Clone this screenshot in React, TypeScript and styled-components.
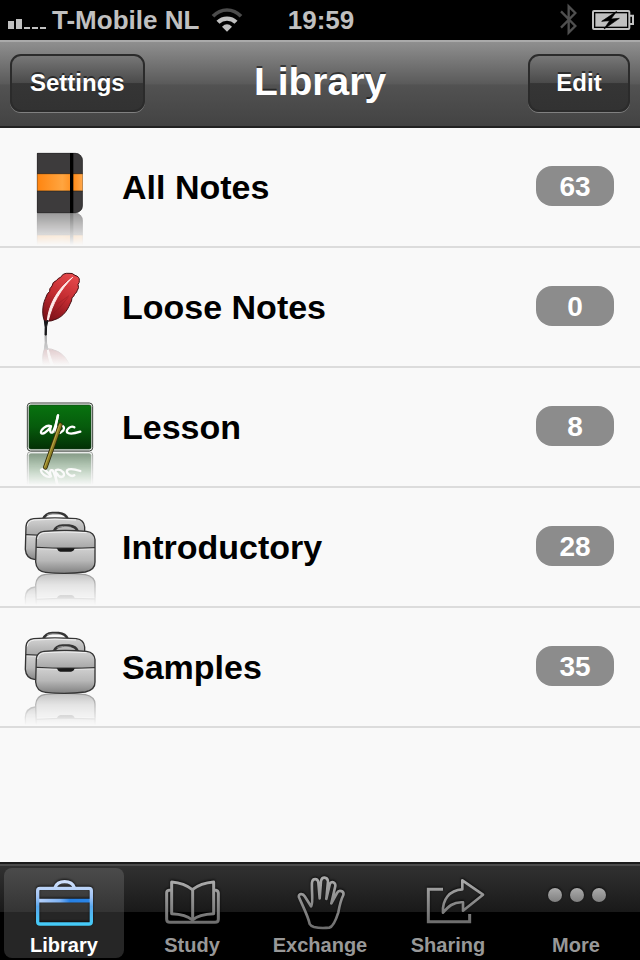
import React, { ReactNode, useId, useState } from 'react';
import styled, { createGlobalStyle } from 'styled-components';

const GlobalStyle = createGlobalStyle`
  * { box-sizing: border-box; }
  body {
    margin: 0;
    background: #f9f9f9;
    font-family: "Liberation Sans", Arial, Helvetica, sans-serif;
    font-weight: bold;
  }
  button { font: inherit; margin: 0; border: 0; cursor: pointer; }
  svg { display: block; flex: none; }
`;

const Screen = styled.div`
  display: flex;
  flex-direction: column;
  min-height: 100vh;
`;

const StatusBar = styled.div`
  display: grid;
  grid-template-columns: 1fr auto 1fr;
  align-items: center;
  height: 40px;
  padding: 0 6px 0 8px;
  background: #000;
  color: #c0c0c0;
  font-size: 26px;
  line-height: 40px;
  white-space: nowrap;
`;

const StatusGroup = styled.div<{ $end?: boolean }>`
  display: flex;
  align-items: center;
  gap: ${(p) => (p.$end ? '14px' : '6px')};
  justify-content: ${(p) => (p.$end ? 'flex-end' : 'flex-start')};
`;

const Carrier = styled.span`
  margin-right: 6px;
`;

const NavBar = styled.header`
  display: grid;
  grid-template-columns: 1fr auto 1fr;
  align-items: center;
  height: 88px;
  padding: 0 10px 2px;
  background: linear-gradient(#8f8f8f, #5a5a5a 50%, #525252 51%, #434343);
  border-top: 2px solid #aaa;
  border-bottom: 2px solid #222;
`;

const Title = styled.h1`
  grid-column: 2;
  margin: 0;
  padding-bottom: 2px;
  color: #fff;
  font-size: 39px;
  line-height: 48px;
  text-shadow: 0 -2px 0 rgba(0, 0, 0, 0.5);
`;

const BarButton = styled.button<{ $end?: boolean }>`
  justify-self: ${(p) => (p.$end ? 'end' : 'start')};
  min-width: 102px;
  height: 58px;
  padding: 0 18px;
  border: 2px solid #2b2b2b;
  border-radius: 11px;
  background: linear-gradient(#777, #4a4a4a 50%, #353535 51%, #323232);
  box-shadow: 0 1px 0 #808080;
  color: #fff;
  font-size: 24px;
  line-height: 32px;
  text-shadow: 0 -2px 0 rgba(0, 0, 0, 0.5);
`;

const NoteList = styled.ul`
  flex: 1;
  margin: 0;
  padding: 0;
  list-style: none;
  background: #f9f9f9;
`;

const NoteRow = styled.a`
  display: flex;
  align-items: center;
  height: 120px;
  padding-right: 26px;
  border-bottom: 2px solid #dcdcdc;
  color: #000;
  text-decoration: none;
`;

const NoteName = styled.span`
  flex: 1;
  padding-left: 2px;
  font-size: 34px;
  line-height: 40px;
`;

const Count = styled.span`
  min-width: 78px;
  height: 40px;
  margin-bottom: 2px;
  border-radius: 16px;
  background: #8c8c8c;
  color: #fff;
  font-size: 28px;
  line-height: 42px;
  text-align: center;
`;

const TabBar = styled.nav`
  display: grid;
  grid-template-columns: repeat(5, 1fr);
  height: 98px;
  padding-bottom: 4px;
  border-top: 2px solid #1c1c1c;
  background: linear-gradient(#4b4b4b 0 2px, #313131 2px, #191919 48px, #000 48px);
`;

const Tab = styled.button<{ $active: boolean }>`
  display: flex;
  flex-direction: column;
  align-items: center;
  margin: 4px 4px 0;
  padding: 0;
  border-radius: 8px;
  background: ${(p) =>
    p.$active ? 'linear-gradient(#4b4b4b, #343434 44px, #262626 44px, #262626)' : 'transparent'};
  color: ${(p) => (p.$active ? '#fff' : '#989898')};
  font-size: 20px;
  line-height: 26px;
`;

function SignalIcon() {
  return (
    <svg width="38" height="30" viewBox="24 15 114 90" fill="#c0c0c0" aria-hidden="true">
      <path d="M24 63h18v24H24zM48 57h18v30H48zM72 81h18v6H72zM96 81h18v6H96zM120 81h18v6h-18z" />
    </svg>
  );
}

function WifiIcon() {
  return (
    <svg width="32" height="30" viewBox="636 15 96 90" fill="none" aria-hidden="true">
      <path d="M642 49Q660 30 684 30T726 49" stroke="#4c4c4c" strokeWidth="11" />
      <path d="M657 67Q668 56 684 56T711 67" stroke="#c0c0c0" strokeWidth="13" />
      <path d="M669 80Q684 66 699 80L684 95Z" fill="#c0c0c0" />
    </svg>
  );
}

function BluetoothIcon() {
  return (
    <svg width="18" height="34" viewBox="722 9 54 102" fill="none" stroke="#4f4f4f" strokeWidth="7" aria-hidden="true">
      <path d="M725 34l43 44-20 20V19l20 20-43 44" />
    </svg>
  );
}

function BatteryIcon() {
  return (
    <svg width="42" height="22" viewBox="816 24 126 66" aria-hidden="true">
      <rect x="819" y="30" width="109" height="54" rx="3" fill="none" stroke="#c0c0c0" strokeWidth="6" />
      <path d="M930 44h9v25h-9" fill="none" stroke="#c0c0c0" strokeWidth="6" />
      <path d="M826 37h95v40h-95z" fill="#c0c0c0" />
      <path d="M890 31l-45 30 24-2-17 25 46-32-25 2z" fill="#000" stroke="#000" strokeWidth="2" />
    </svg>
  );
}

interface ReflectedProps {
  base: number;
  strength: number;
  front?: ReactNode;
  children: ReactNode;
}

function Reflected({ base, strength, front, children }: ReflectedProps) {
  const id = useId();
  return (
    <svg width="120" height="118" viewBox="0 -6 360 354" aria-hidden="true">
      <defs>
        <linearGradient id={`${id}f`} gradientUnits="userSpaceOnUse" x1="0" y1={base} x2="0" y2="346">
          <stop offset="0" stopColor="#fff" stopOpacity={strength} />
          <stop offset="1" stopColor="#fff" stopOpacity="0" />
        </linearGradient>
        <mask id={`${id}m`} maskUnits="userSpaceOnUse" x="0" y={base} width="360" height="100">
          <rect y={base} width="360" height="100" fill={`url(#${id}f)`} />
        </mask>
      </defs>
      <g mask={`url(#${id}m)`}>
        <g transform={`translate(0 ${base * 2}) scale(1 -1)`}>{children}</g>
      </g>
      {children}
      {front}
    </svg>
  );
}

function NotebookIcon() {
  const id = useId();
  return (
    <Reflected base={249} strength={0.5}>
      <defs>
        <linearGradient id={id}>
          <stop offset="0" stopColor="#ff8510" />
          <stop offset="0.55" stopColor="#ffa540" />
          <stop offset="0.8" stopColor="#ff8c1a" />
          <stop offset="1" stopColor="#ffa84c" />
        </linearGradient>
      </defs>
      <path d="M111 69h115a22 22 0 0 1 22 22v136a22 22 0 0 1-22 22H111z" fill="#3d3b3c" />
      <path d="M112 70h114a21 21 0 0 1 21 21v136a21 21 0 0 1-21 21H112z" fill="none" stroke="#2a292a" strokeWidth="2" />
      <path d="M112 131h136v52H112z" fill={`url(#${id})`} />
      <path d="M111 131h137M111 183h137" stroke="#28211a" strokeWidth="2" />
      <path d="M210 69h10v180h-10z" fill="#000" />
    </Reflected>
  );
}

function FeatherIcon() {
  const id = useId();
  return (
    <Reflected base={255} strength={0.36}>
      <defs>
        <linearGradient id={id} x1="0.7" y1="0" x2="0.3" y2="1">
          <stop offset="0" stopColor="#e4484b" />
          <stop offset="0.5" stopColor="#c22b30" />
          <stop offset="1" stopColor="#7e1219" />
        </linearGradient>
      </defs>
      <path
        d="M134 214C125 195 127 166 136 146Q141 130 149 124Q147 116 156 108Q157 96 170 91Q174 84 182 82Q189 68 207 70Q217 68 225 76Q239 80 238 91Q239 98 234 103Q238 114 232 121Q230 129 224 132Q222 141 216 143Q216 153 210 162C201 184 188 198 172 206Q155 215 134 214Z"
        fill={`url(#${id})`}
        stroke="#451014"
        strokeWidth="3"
      />
      <path d="M144 205Q180 177 204 142M151 186Q154 158 164 137M185 117l15-24M172 162l35-25" stroke="#80161d" strokeOpacity=".35" strokeWidth="3" fill="none" />
      <path d="M142 211C146 168 169 119 218 82C181 119 157 161 145 211Z" fill="#ffeceb" stroke="#ffeceb" strokeWidth="3" />
      <path d="M133 212Q138 217 144 211Q138 228 139 255H135Q137 230 133 212Z" fill="#18181a" stroke="#18181a" strokeWidth="3" />
    </Reflected>
  );
}

function ChalkboardIcon() {
  const id = useId();
  const pointer = (
    <g strokeLinecap="round">
      <path d="M181 164L136 292" stroke="#302a0b" strokeWidth="14" />
      <path d="M181 164L136 292" stroke="#8d7d22" strokeWidth="9" />
      <path d="M179 164L134 291" stroke="#cdbd5c" strokeWidth="2" />
    </g>
  );
  return (
    <Reflected base={244} strength={0.5} front={pointer}>
      <defs>
        <linearGradient id={id} x1="0" y1="0" x2="0" y2="1">
          <stop offset="0" stopColor="#08730f" />
          <stop offset="0.5" stopColor="#065b0c" />
          <stop offset="1" stopColor="#033005" />
        </linearGradient>
      </defs>
      <rect x="82" y="99" width="196" height="144" rx="10" fill="#f4f7f4" stroke="#3b413b" strokeWidth="3" />
      <rect x="87" y="105" width="186" height="132" rx="5" fill={`url(#${id})`} stroke="#173c19" strokeWidth="2" />
      <g fill="none" stroke="#fff" strokeWidth="7" strokeLinecap="round" strokeLinejoin="round">
        <path d="M153 169C139 162 122 180 123 188C127 196 142 185 153 169C149 179 149 191 158 187Q166 174 174 136" />
        <path d="M174 136Q166 162 167 187Q178 193 190 181Q196 169 184 167Q175 167 171 178" />
        <path d="M223 172C212 165 198 179 201 187Q210 195 241 185" />
      </g>
    </Reflected>
  );
}

function CasesIcon() {
  const id = useId();
  const bag = (
    <g stroke="#353535" strokeWidth="4">
      <path d="M161 125Q167 108 188 107H207Q228 109 234 125" fill="none" strokeWidth="8" />
      <path d="M172 113Q188 106 213 112" fill="none" stroke="#bdbdbd" strokeWidth="2" />
      <path d="M109 147Q111 126 132 124Q196 119 260 124Q283 127 285 149V216Q286 239 256 246Q196 254 137 247Q109 244 107 216Z" fill={`url(#${id})`} />
      <path d="M109 172Q196 177 285 173" fill="none" />
      <path d="M111 176Q196 181 283 177" fill="none" stroke="#eee" strokeWidth="2" />
      <path d="M113 147Q114 130 134 128Q196 123 259 128" fill="none" stroke="#f1f1f1" strokeWidth="3" />
      <path d="M170 175H224Q221 185 213 185H181Q174 184 170 175Z" fill="#1a1a1a" stroke="none" />
    </g>
  );
  return (
    <Reflected base={250} strength={0.48}>
      <defs>
        <linearGradient id={id} x1="0" y1="0" x2="0" y2="1">
          <stop offset="0" stopColor="#d4d4d4" />
          <stop offset="0.39" stopColor="#a9a9a9" />
          <stop offset="0.42" stopColor="#cfcfcf" />
          <stop offset="0.7" stopColor="#b8b8b8" />
          <stop offset="1" stopColor="#808080" />
        </linearGradient>
      </defs>
      <g transform="translate(-31 -38)">{bag}</g>
      {bag}
    </Reflected>
  );
}

const TabSvg = styled.svg`
  filter: drop-shadow(0 -1px 1px rgba(0, 0, 0, 0.7));
`;

function TabGradient({ id, y1, y2 }: { id: string; y1: number; y2: number }) {
  return (
    <linearGradient id={id} gradientUnits="userSpaceOnUse" x1="0" y1={y1} x2="0" y2={y2}>
      <stop offset="0" stopColor="#acacac" />
      <stop offset="1" stopColor="#6c6c6c" />
    </linearGradient>
  );
}

function LibraryTabIcon() {
  return (
    <TabSvg width="80" height="64" viewBox="72 39 240 192" fill="none" aria-hidden="true">
      <defs>
        <linearGradient id="tab-library" gradientUnits="userSpaceOnUse" x1="0" y1="75" x2="0" y2="212">
          <stop offset="0" stopColor="#d3e2fb" />
          <stop offset="0.38" stopColor="#9fc3f5" />
          <stop offset="0.58" stopColor="#5aa9ef" />
          <stop offset="1" stopColor="#43cdf8" />
        </linearGradient>
        <linearGradient id="tab-library-lid" gradientUnits="userSpaceOnUse" x1="116" y1="0" x2="272" y2="0">
          <stop offset="0" stopColor="#b5d0f9" />
          <stop offset="0.4" stopColor="#80b4f5" />
          <stop offset="0.6" stopColor="#2680e5" />
          <stop offset="1" stopColor="#2b86e8" />
        </linearGradient>
      </defs>
      <path d="M165 98Q171 80 194 80T223 98" stroke="url(#tab-library)" strokeWidth="10" />
      <path d="M116 137H272" stroke="url(#tab-library-lid)" strokeWidth="11" />
      <rect x="113" y="100" width="161" height="107" rx="7" stroke="url(#tab-library)" strokeWidth="10" />
    </TabSvg>
  );
}

function StudyTabIcon() {
  return (
    <TabSvg width="80" height="64" viewBox="456 39 240 192" fill="none" aria-hidden="true">
      <defs><TabGradient id="tab-study" y1={75} y2={208} /></defs>
      <g stroke="url(#tab-study)" strokeWidth="9" strokeLinejoin="round">
        <path d="M514 106H507Q500 107 500 114V193Q500 202 510 202H645Q655 202 655 193V114Q654 107 648 106H641" />
        <path d="M577 195Q558 178 515 176V81Q553 84 577 104Q602 84 641 81V176Q597 178 577 195Z" />
        <path d="M578 103V196" />
      </g>
    </TabSvg>
  );
}

function ExchangeTabIcon() {
  return (
    <TabSvg width="80" height="64" viewBox="150 39 240 192" fill="none" aria-hidden="true">
      <defs><TabGradient id="tab-exchange" y1={65} y2={222} /></defs>
      <path
        d="M239 207C235 185 218 153 207 127C204 115 219 114 224 124L243 154C251 149 244 105 246 82C248 69 263 69 265 82L269 130L273 78C276 64 292 65 294 79L289 132L299 89C303 75 317 82 316 93L304 145L321 114C327 103 343 108 340 120C332 136 328 155 325 172C319 191 311 215 298 218Q271 221 252 216Q242 213 239 207Z"
        stroke="url(#tab-exchange)"
        strokeWidth="8"
        strokeLinejoin="round"
      />
    </TabSvg>
  );
}

function SharingTabIcon() {
  return (
    <TabSvg width="80" height="64" viewBox="24 39 240 192" fill="none" aria-hidden="true">
      <defs><TabGradient id="tab-sharing" y1={70} y2={205} /></defs>
      <g stroke="url(#tab-sharing)">
        <path d="M129 103H85V200H209V177" strokeWidth="9" />
        <path d="M129 173C126 135 148 105 187 103V76L249 119L189 167V142C159 140 145 155 129 173Z" strokeWidth="8" strokeLinejoin="round" />
      </g>
    </TabSvg>
  );
}

function MoreTabIcon() {
  return (
    <TabSvg width="80" height="64" viewBox="408 39 240 192" aria-hidden="true">
      <defs><TabGradient id="tab-more" y1={98} y2={160} /></defs>
      <g fill="url(#tab-more)">
        <circle cx="465" cy="120" r="21" />
        <circle cx="531" cy="120" r="21" />
        <circle cx="597" cy="120" r="21" />
      </g>
    </TabSvg>
  );
}

const notes = [
  { name: 'All Notes', count: 63, Icon: NotebookIcon },
  { name: 'Loose Notes', count: 0, Icon: FeatherIcon },
  { name: 'Lesson', count: 8, Icon: ChalkboardIcon },
  { name: 'Introductory', count: 28, Icon: CasesIcon },
  { name: 'Samples', count: 35, Icon: CasesIcon },
];

const tabs = [
  { name: 'Library', Icon: LibraryTabIcon },
  { name: 'Study', Icon: StudyTabIcon },
  { name: 'Exchange', Icon: ExchangeTabIcon },
  { name: 'Sharing', Icon: SharingTabIcon },
  { name: 'More', Icon: MoreTabIcon },
];

export default function App() {
  const [active, setActive] = useState('Library');
  return (
    <>
      <GlobalStyle />
      <Screen>
        <StatusBar>
          <StatusGroup>
            <SignalIcon />
            <Carrier>T-Mobile NL</Carrier>
            <WifiIcon />
          </StatusGroup>
          <time>19:59</time>
          <StatusGroup $end>
            <BluetoothIcon />
            <BatteryIcon />
          </StatusGroup>
        </StatusBar>
        <NavBar>
          <BarButton type="button">Settings</BarButton>
          <Title>Library</Title>
          <BarButton type="button" $end>Edit</BarButton>
        </NavBar>
        <NoteList>
          {notes.map(({ name, count, Icon }) => (
            <li key={name}>
              <NoteRow href="#">
                <Icon />
                <NoteName>{name}</NoteName>
                <Count>{count}</Count>
              </NoteRow>
            </li>
          ))}
        </NoteList>
        <TabBar>
          {tabs.map(({ name, Icon }) => (
            <Tab
              key={name}
              type="button"
              $active={name === active}
              aria-current={name === active ? 'page' : undefined}
              onClick={() => setActive(name)}
            >
              <Icon />
              {name}
            </Tab>
          ))}
        </TabBar>
      </Screen>
    </>
  );
}
